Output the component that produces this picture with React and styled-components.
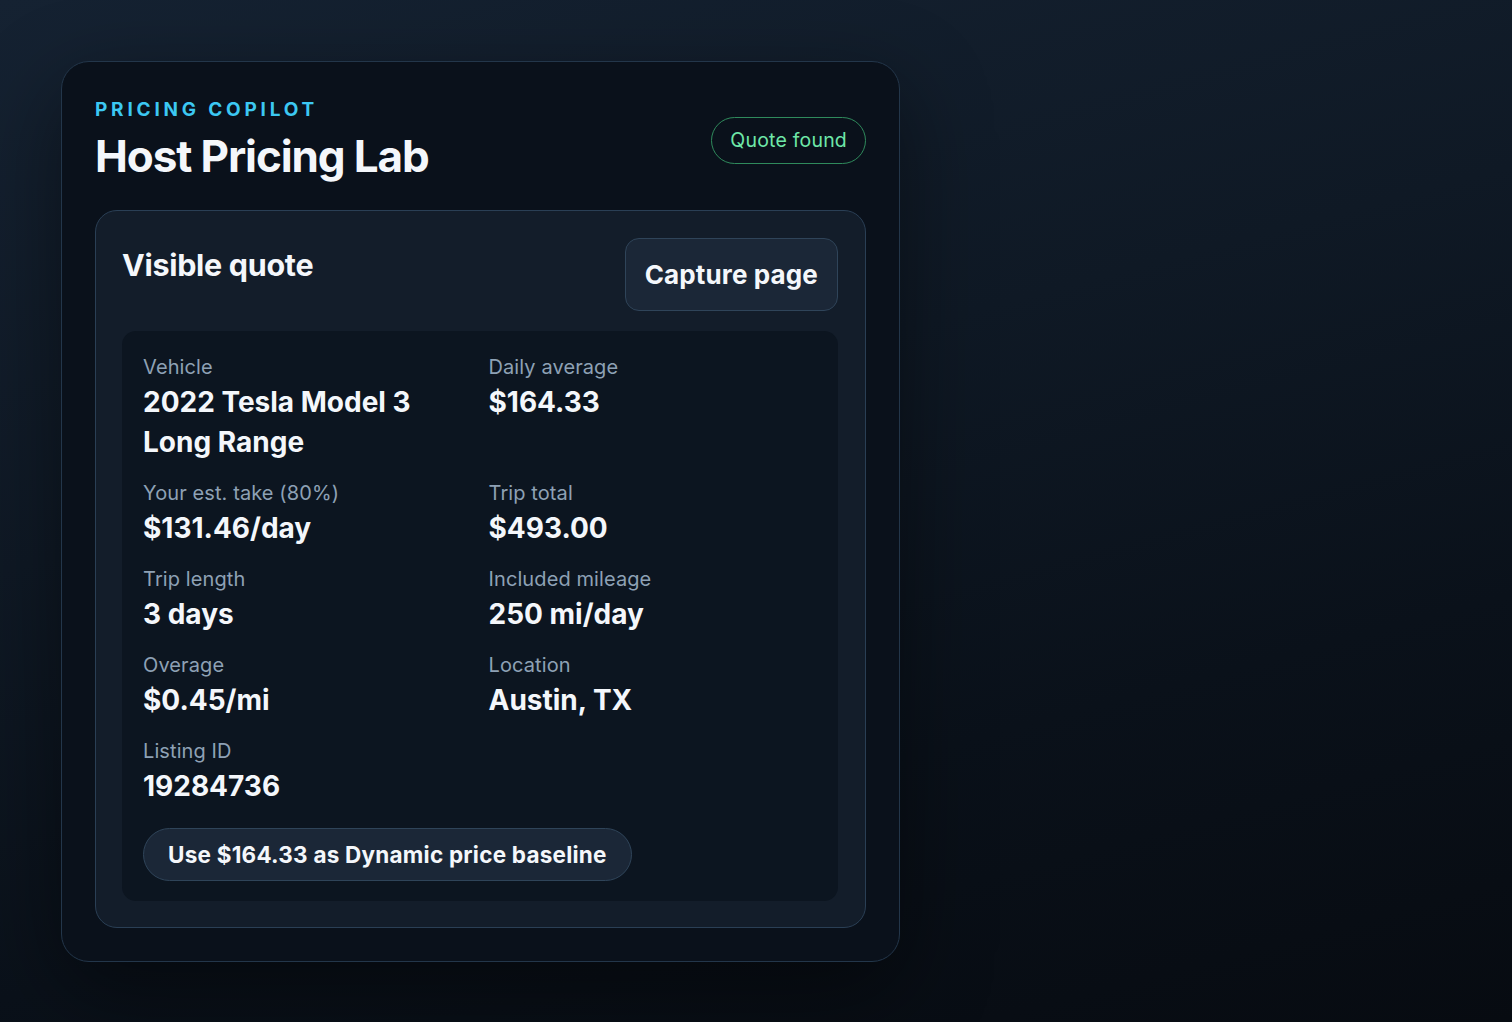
import React from "react";
import styled, { createGlobalStyle } from "styled-components";

const Global = createGlobalStyle`
  html, body { margin: 0; padding: 0; }
  body {
    min-height: 1022px;
    font-family: Inter, "Noto Sans", "Liberation Sans", sans-serif;
    background: linear-gradient(165deg, #152232 0%, #0f1925 40%, #0a111a 70%, #070b11 100%);
    color: #f3f6fa;
  }
  * { box-sizing: border-box; }
`;

const Page = styled.div`
  min-height: 1022px;
  padding: 61px 0 0 61px;
`;

const Panel = styled.section`
  width: 839px;
  background: #0a111b;
  border: 1.5px solid #23364a;
  border-radius: 28px;
  padding: 36px 33px 33px 33px;
  box-shadow: 0 30px 90px rgba(0, 0, 0, 0.45);
`;

const Header = styled.header`
  display: flex;
  align-items: center;
  justify-content: space-between;
  margin-bottom: 28px;
`;

const Titles = styled.div`
  display: flex;
  flex-direction: column;
`;

const Eyebrow = styled.div`
  font-size: 19px;
  font-weight: 700;
  letter-spacing: 0.2em;
  color: #3cc8f2;
  line-height: 24px;
`;

const Title = styled.h1`
  margin: 8px 0 0;
  font-size: 44px;
  font-weight: 700;
  letter-spacing: -0.025em;
  line-height: 52px;
  color: #f4f7fb;
`;

const Badge = styled.span`
  display: inline-flex;
  align-items: center;
  height: 47px;
  padding: 0 18px;
  border: 1.5px solid #2f8a5c;
  border-radius: 999px;
  color: #6ee7a8;
  font-size: 19.5px;
  letter-spacing: 0.01em;
`;

const Card = styled.div`
  background: #131d2a;
  border: 1.5px solid #2a3f55;
  border-radius: 22px;
  padding: 27px 27px 26px 26px;
`;

const CardHead = styled.div`
  display: flex;
  align-items: flex-start;
  justify-content: space-between;
  margin-bottom: 20px;
`;

const CardTitle = styled.h2`
  margin: 8px 0 0;
  font-size: 30.5px;
  font-weight: 700;
  line-height: 38px;
  letter-spacing: -0.01em;
  color: #f4f7fb;
`;

const Button = styled.button`
  font-family: inherit;
  height: 73px;
  padding: 0 19px;
  background: #1b2737;
  border: 1.5px solid #2f4459;
  border-radius: 14px;
  color: #f4f7fb;
  font-size: 26px;
  font-weight: 700;
  letter-spacing: 0.005em;
`;

const Data = styled.div`
  background: #0c1520;
  border-radius: 14px;
  padding: 23px 20px 20px 21px;
`;

const Grid = styled.dl`
  margin: 0;
  display: grid;
  grid-template-columns: 1fr 1fr;
  column-gap: 16px;
  row-gap: 18px;
`;

const Field = styled.div`
  display: flex;
  flex-direction: column;
  gap: 2px;
`;

const Label = styled.dt`
  font-size: 20px;
  line-height: 26px;
  color: #8ea1b5;
  letter-spacing: 0.005em;
`;

const Value = styled.dd`
  margin: 0;
  font-size: 28px;
  line-height: 40px;
  font-weight: 700;
  color: #f4f7fb;
  letter-spacing: 0;
`;

const PillButton = styled.button`
  font-family: inherit;
  margin-top: 22px;
  height: 53px;
  padding: 0 24px;
  background: #1b2737;
  border: 1.5px solid #2f4459;
  border-radius: 999px;
  color: #f4f7fb;
  font-size: 22.5px;
  font-weight: 700;
  letter-spacing: 0.01em;
`;

const fields = [
  ["Vehicle", "2022 Tesla Model 3 Long Range"],
  ["Daily average", "$164.33"],
  ["Your est. take (80%)", "$131.46/day"],
  ["Trip total", "$493.00"],
  ["Trip length", "3 days"],
  ["Included mileage", "250 mi/day"],
  ["Overage", "$0.45/mi"],
  ["Location", "Austin, TX"],
  ["Listing ID", "19284736"],
];

export default function App() {
  return (
    <>
      <Global />
      <Page>
        <Panel>
          <Header>
            <Titles>
              <Eyebrow>PRICING COPILOT</Eyebrow>
              <Title>Host Pricing Lab</Title>
            </Titles>
            <Badge>Quote found</Badge>
          </Header>
          <Card>
            <CardHead>
              <CardTitle>Visible quote</CardTitle>
              <Button>Capture page</Button>
            </CardHead>
            <Data>
              <Grid>
                {fields.map(([l, v]) => (
                  <Field key={l}>
                    <Label>{l}</Label>
                    <Value>{v}</Value>
                  </Field>
                ))}
              </Grid>
              <PillButton>Use $164.33 as Dynamic price baseline</PillButton>
            </Data>
          </Card>
        </Panel>
      </Page>
    </>
  );
}
